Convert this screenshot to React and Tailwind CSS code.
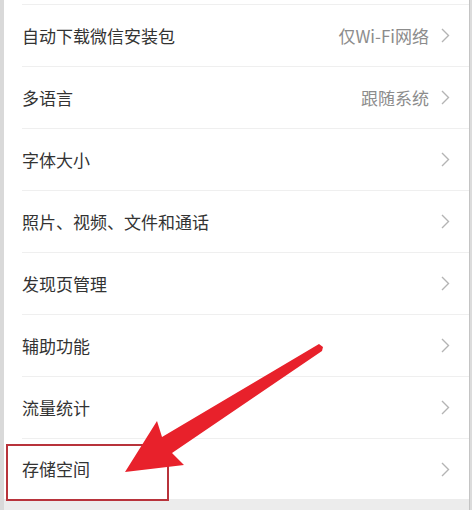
const rows = [
  { label: '自动下载微信安装包', value: '仅Wi-Fi网络' },
  { label: '多语言', value: '跟随系统' },
  { label: '字体大小' },
  { label: '照片、视频、文件和通话' },
  { label: '发现页管理' },
  { label: '辅助功能' },
  { label: '流量统计' },
  { label: '存储空间' },
]

function Chevron() {
  return (
    <svg width="9" height="15" viewBox="0 0 9 15" className="shrink-0">
      <path d="M1 1 L7.5 7.5 L1 14" fill="none" stroke="#b4b4b4" strokeWidth="1.4" />
    </svg>
  )
}

export default function App() {
  return (
    <div
      className="relative w-[472px] h-[510px] overflow-hidden bg-white flex"
      style={{ fontFamily: '"Noto Sans CJK SC", "Noto Sans", sans-serif' }}
    >
      <div className="w-[4px] bg-[#d9d9d9] shrink-0" />
      <div className="flex-1 flex flex-col">
        <div className="h-[4px] bg-white" />
        {rows.map((row, i) => (
          <div
            key={row.label}
            className={`ml-[18px] pr-[19px] border-t border-[#efefef] flex items-center justify-between ${
              i === rows.length - 1 ? 'h-[61px]' : 'h-[62px]'
            }`}
          >
            <span className="text-[17px] text-[#333333]">{row.label}</span>
            <div className="flex items-center gap-[12px]">
              {row.value && <span className="text-[17px] text-[#8c8c8c]">{row.value}</span>}
              <Chevron />
            </div>
          </div>
        ))}
        <div className="flex-1 bg-[#ececec]" />
      </div>
      <div className="w-[3px] shrink-0 bg-[#dcdcdc] border-l border-[#c4c4c4]" />

      {/* highlight box + arrow */}
      <div className="absolute left-[6px] top-[444px] w-[163px] h-[57px] border-2 border-[#b8333b]" />
      <svg className="absolute left-0 top-0" width="472" height="510" viewBox="0 0 472 510">
        <polygon
          points="125,472 157,421 162,437 319,344 323,347 322,351 172,453 184,465"
          fill="#e8212b"
        />
      </svg>
    </div>
  )
}
